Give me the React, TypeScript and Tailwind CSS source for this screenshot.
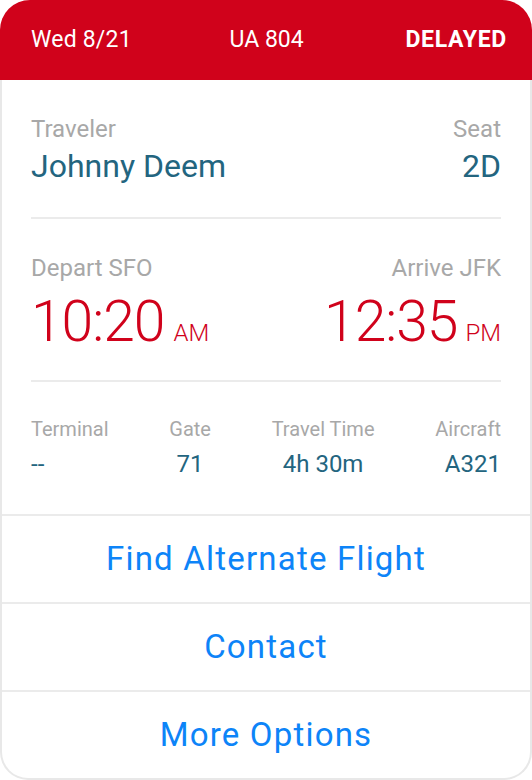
import React from "react"

const font = { fontFamily: "Roboto, 'Noto Sans', sans-serif" }

const stats = [
    { label: "Terminal", value: "--", align: "items-start" },
    { label: "Gate", value: "71", align: "items-center" },
    { label: "Travel Time", value: "4h 30m", align: "items-center" },
    { label: "Aircraft", value: "A321", align: "items-end" },
]

const actions = ["Find Alternate Flight", "Contact", "More Options"]

export default function App() {
    return (
        <div className="w-[532px] h-[780px] bg-white flex flex-col" style={font}>
            {/* Header */}
            <div className="h-[80px] shrink-0 rounded-t-[30px] bg-[#d0021b] pl-[31px] pr-[25px] flex items-center justify-between text-white text-[23px] leading-[28px]">
                <span className="tracking-[0.2px]">Wed 8/21</span>
                <span className="pr-[4px]">UA 804</span>
                <span className="font-bold tracking-[0.7px]">DELAYED</span>
            </div>

            {/* Body */}
            <div className="flex-1 flex flex-col border-x-2 border-b-2 border-[#e8e8e8] rounded-b-[28px]">
                <div className="px-[29px]">
                    {/* Traveler */}
                    <div className="pt-[35px] pb-[31px] flex justify-between border-b-2 border-[#ebebeb]">
                        <div className="flex flex-col">
                            <span className="text-[24px] leading-[28px] text-[#a8a8a8]">Traveler</span>
                            <span className="mt-[3px] text-[32px] leading-[40px] text-[#23657f]">Johnny Deem</span>
                        </div>
                        <div className="flex flex-col items-end">
                            <span className="text-[24px] leading-[28px] text-[#a8a8a8]">Seat</span>
                            <span className="mt-[3px] text-[32px] leading-[40px] text-[#23657f]">2D</span>
                        </div>
                    </div>

                    {/* Times */}
                    <div className="pt-[35px] pb-[28px] flex justify-between border-b-2 border-[#ebebeb]">
                        <div className="flex flex-col">
                            <span className="text-[24px] leading-[28px] text-[#a8a8a8]">Depart SFO</span>
                            <div className="mt-[10px] flex items-baseline gap-[9px] text-[#d0021b]">
                                <span className="text-[57px] leading-[60px] font-light tracking-[-1px]">10:20</span>
                                <span className="text-[24px] leading-[28px] font-light">AM</span>
                            </div>
                        </div>
                        <div className="flex flex-col items-end">
                            <span className="text-[24px] leading-[28px] text-[#a8a8a8]">Arrive JFK</span>
                            <div className="mt-[10px] flex items-baseline gap-[8px] text-[#d0021b]">
                                <span className="text-[57px] leading-[60px] font-light tracking-[-1px]">12:35</span>
                                <span className="text-[24px] leading-[28px] font-light">PM</span>
                            </div>
                        </div>
                    </div>

                    {/* Stats */}
                    <div className="pt-[35px] pb-[36px] flex justify-between">
                        {stats.map((s) => (
                            <div key={s.label} className={`flex flex-col ${s.align}`}>
                                <span className="text-[20px] leading-[24px] text-[#a8a8a8]">{s.label}</span>
                                <span className="mt-[9px] text-[24px] leading-[28px] text-[#23657f]">{s.value}</span>
                            </div>
                        ))}
                    </div>
                </div>

                {/* Actions */}
                {actions.map((a) => (
                    <button
                        key={a}
                        className="h-[88px] shrink-0 flex items-center justify-center border-t-2 border-[#ebebeb] text-[33px] leading-[40px] tracking-[1.2px] text-[#0d84f8]"
                    >
                        {a}
                    </button>
                ))}
            </div>
        </div>
    )
}
